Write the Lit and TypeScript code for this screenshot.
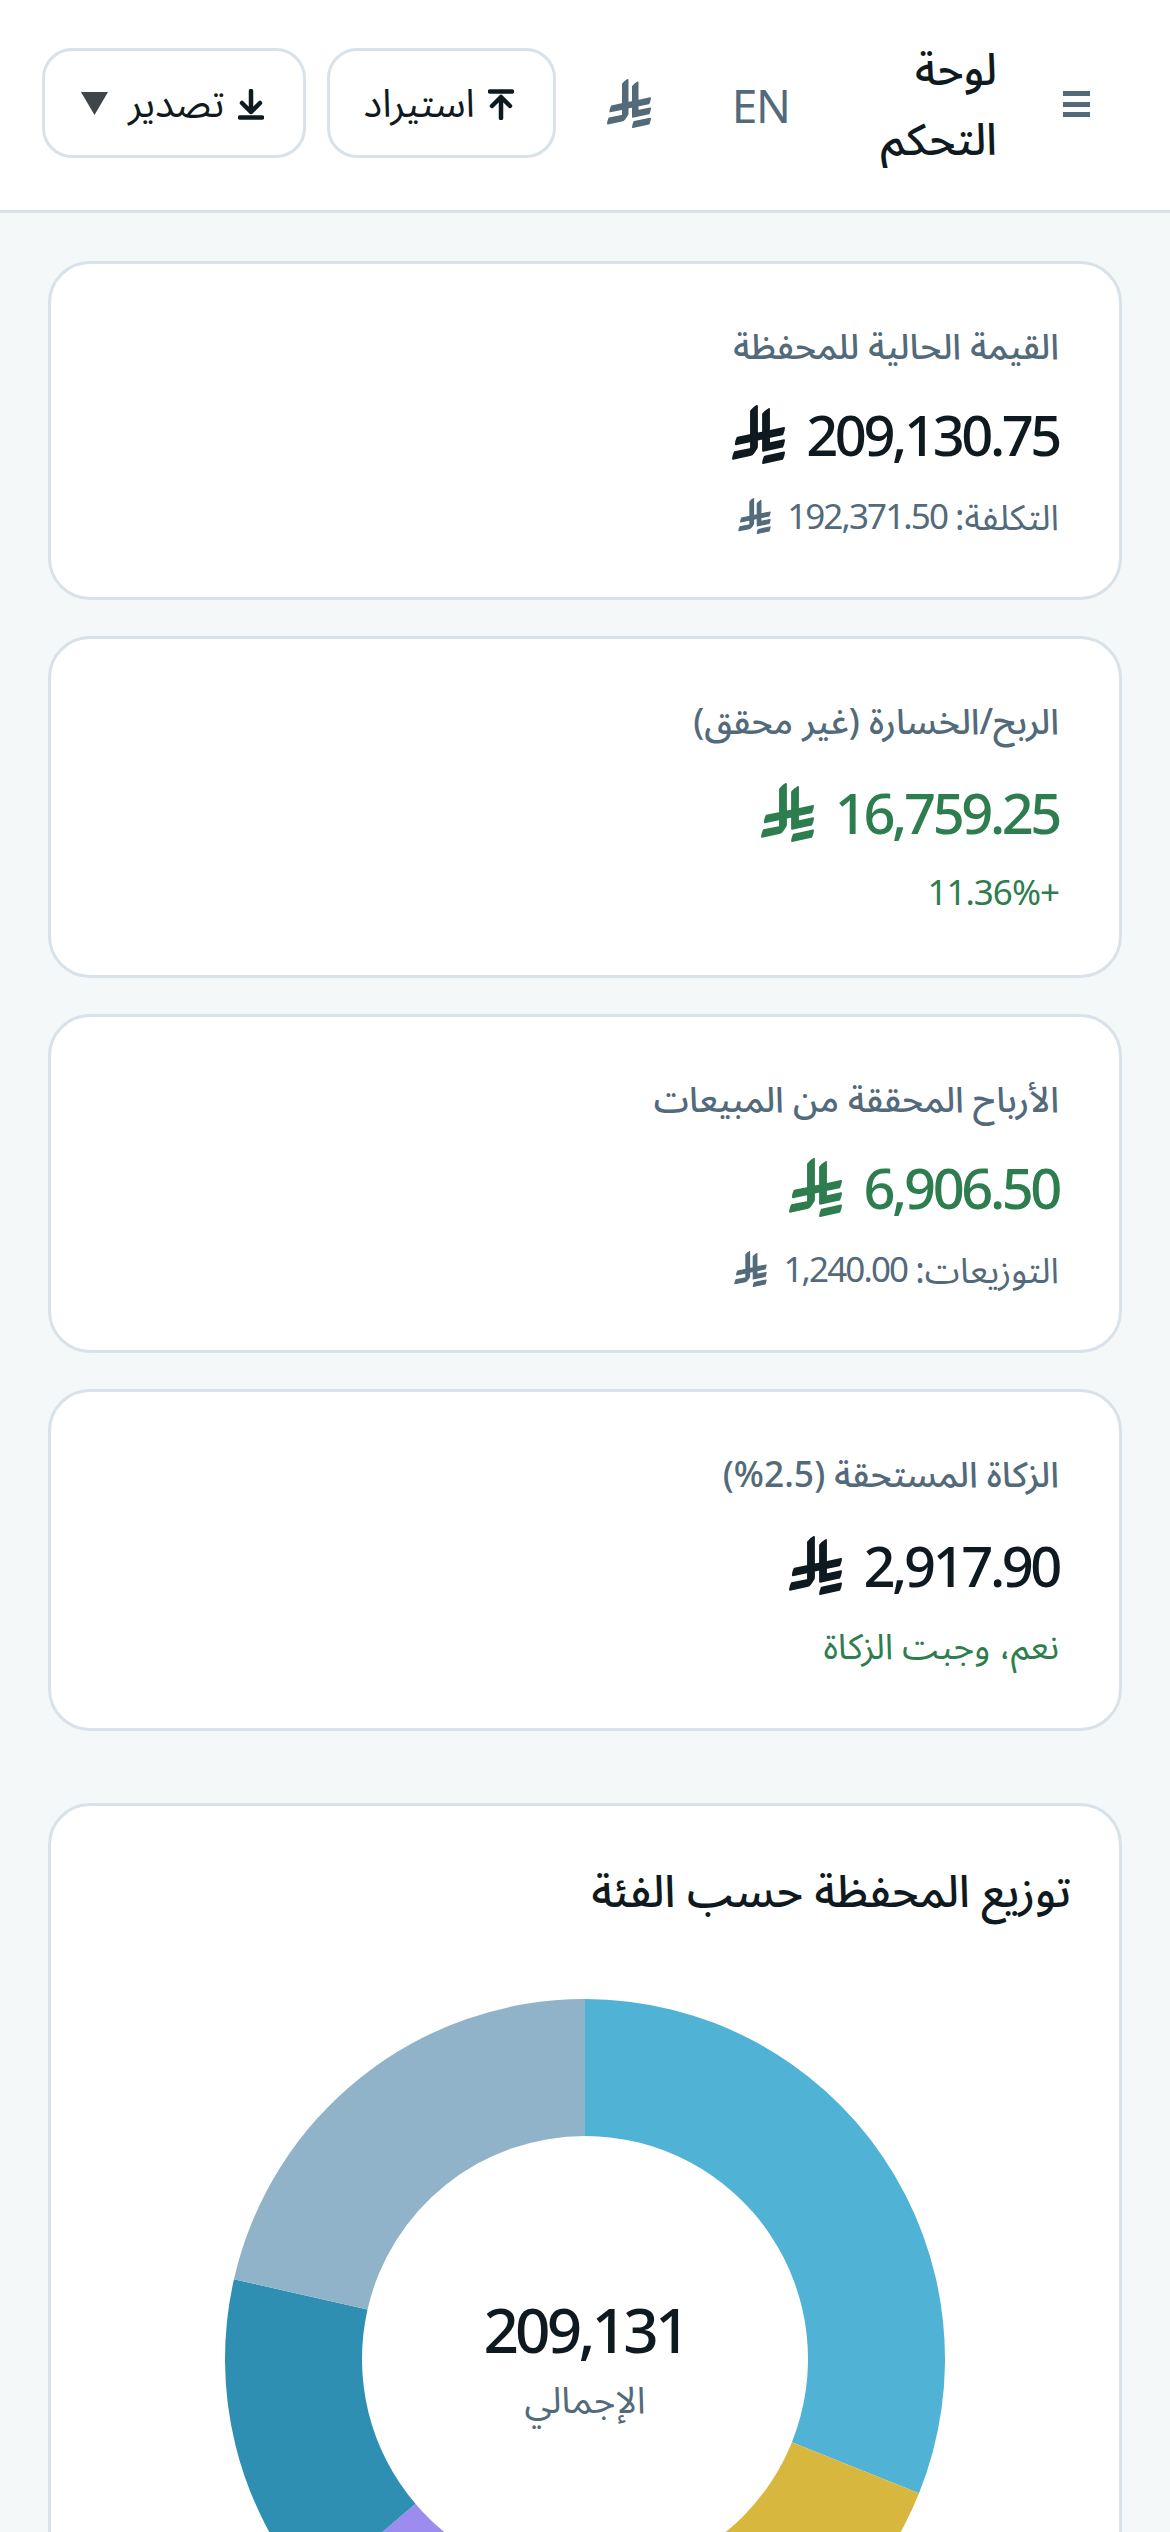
import { LitElement, html, css, svg } from "lit";
import { customElement } from "lit/decorators.js";

const RIYAL_D = [
  "M699.62,1113.02h0c-20.06,44.48-33.32,92.75-38.4,143.37l424.51-90.24c20.06-44.47,33.31-92.75,38.4-143.37l-424.51,90.24Z",
  "M1085.73,895.8c20.06-44.47,33.32-92.75,38.4-143.37l-330.68,70.33v-135.2l292.27-62.11c20.06-44.47,33.32-92.75,38.4-143.37l-330.68,70.27V66.13c-50.67,28.45-95.67,66.32-132.25,110.99v403.35l-132.25,28.11V0c-50.67,28.44-95.67,66.32-132.25,110.99v525.69l-295.91,62.88c-20.06,44.47-33.33,92.75-38.42,143.37l334.33-71.05v170.26l-358.3,76.14c-20.06,44.47-33.32,92.75-38.4,143.37l375.04-79.7c30.53-6.35,56.77-24.4,73.83-49.24l68.78-101.97v-.02c7.14-10.55,11.3-23.27,11.3-36.97v-149.98l132.25-28.11v270.4l424.53-90.28Z",
];

const riyal = (cls: string) => html`<svg class="riyal ${cls}" viewBox="-20 -20 1164.14 1296.39" aria-hidden="true">
  ${RIYAL_D.map((d) => svg`<path d=${d} fill="currentColor" stroke="currentColor" stroke-width="40" stroke-linejoin="round"></path>`)}
</svg>`;

interface Slice { from: number; to: number; color: string }
const SLICES: Slice[] = [
  { from: 0, to: 111.9, color: "#50b3d5" },
  { from: 111.9, to: 205, color: "#d8b73f" },
  { from: 205, to: 229.5, color: "#9d8cef" },
  { from: 229.5, to: 282.8, color: "#2e8fb3" },
  { from: 282.8, to: 360, color: "#90b3c9" },
];

function arc({ from, to }: Slice, R = 360, r = 223, c = 360) {
  const p = (a: number, rad: number) => {
    const t = (a * Math.PI) / 180;
    return `${(c + rad * Math.sin(t)).toFixed(2)} ${(c - rad * Math.cos(t)).toFixed(2)}`;
  };
  const large = to - from > 180 ? 1 : 0;
  return `M${p(from, R)}A${R} ${R} 0 ${large} 1 ${p(to, R)}L${p(to, r)}A${r} ${r} 0 ${large} 0 ${p(from, r)}Z`;
}

interface Card {
  label: string;
  value: string;
  tone: string;
  subText?: string;
  subNum?: string;
  subTone: string;
  tall?: boolean;
}

const CARDS: Card[] = [
  { label: "القيمة الحالية للمحفظة", value: "209,130.75", tone: "", subText: "التكلفة:", subNum: "192,371.50", subTone: "icon" },
  { label: "الربح/الخسارة (غير محقق)", value: "16,759.25", tone: "green", subNum: "+11.36%", subTone: "green", tall: true },
  { label: "الأرباح المحققة من المبيعات", value: "6,906.50", tone: "green", subText: "التوزيعات:", subNum: "1,240.00", subTone: "icon" },
  { label: "الزكاة المستحقة (2.5%)", value: "2,917.90", tone: "", subText: "نعم، وجبت الزكاة", subTone: "green", tall: true },
];

@customElement("app-root")
export class AppRoot extends LitElement {
  static styles = css`
    :host {
      display: block;
      height: 2532px;
      overflow: hidden;
      background: #f5f8f9;
      color: #0f1a20;
      font-family: "Noto Sans", "Noto Sans Arabic", sans-serif;
    }
    .header {
      display: flex;
      align-items: center;
      gap: 21px;
      height: 210px;
      padding: 0 48px 0 42px;
      background: #fff;
      border-bottom: 3px solid #d8e2e8;
    }
    .menu {
      display: flex;
      flex-direction: column;
      gap: 5.5px;
      padding: 0 32px 0 45px;
      margin-top: -2px;
    }
    .menu i {
      display: block;
      width: 27px;
      height: 5px;
      background: #526a7a;
    }
    .title {
      flex: 1;
      min-width: 0;
      height: 135px;
      margin-top: -9px;
      overflow: hidden;
      font-size: 44px;
      font-weight: 500;
      line-height: 70px;
    }
    .lang {
      padding: 0 30px;
      font-size: 46px;
      letter-spacing: -1.5px;
      color: #526a7a;
    }
    .cur {
      display: flex;
      padding: 0 30px;
      margin-top: -4px;
      color: #526a7a;
    }
    .riyal { display: block; flex: none; }
    .r-head { width: 44px; height: 49px; }
    .r-hero { width: 53px; height: 59px; }
    .r-sub { width: 33px; height: 36px; }
    .btn {
      display: flex;
      align-items: center;
      gap: 13px;
      box-sizing: border-box;
      height: 110px;
      margin-top: -4px;
      padding: 3px 39px 0 36px;
      background: #fff;
      border: 3px solid #d8e2e8;
      border-radius: 30px;
      font-size: 39px;
      white-space: nowrap;
    }
    .btn.import { padding-inline-end: 34px; }
    .btn svg { display: block; flex: none; }
    .caret { margin-inline-start: 7px; margin-top: -3px; }
    .main {
      display: flex;
      flex-direction: column;
      gap: 36px;
      padding: 48px 48px 0;
    }
    .card {
      box-sizing: border-box;
      height: 339px;
      padding: 54px 60px 0;
      background: #fff;
      border: 3px solid #d8e2e8;
      border-radius: 42px;
    }
    .card.tall { height: 342px; }
    .label {
      font-size: 35.4px;
      font-weight: 500;
      line-height: 54px;
      color: #526a7a;
      white-space: nowrap;
    }
    .value {
      display: flex;
      align-items: center;
      gap: 21px;
      height: 76px;
      margin-top: 24px;
      font-size: 56px;
      font-weight: 500;
      line-height: 76px;
      letter-spacing: -3.4px;
    }
    .tall .value { margin-top: 27px; }
    .value.green { color: #2e7d4f; }
    .sub {
      display: flex;
      align-items: center;
      gap: 8px;
      height: 54px;
      margin-top: 17px;
      font-size: 35.5px;
      line-height: 54px;
      color: #526a7a;
    }
    .tall .sub { margin-top: 15px; }
    .sub .num { font-size: 35px; letter-spacing: -1.9px; }
    .sub .riyal { margin-inline-start: 8px; }
    .sub.green { color: #2e7d4f; }
    .sub.green .num { letter-spacing: -1px; }
    .chart-card {
      margin-top: 36px;
      padding: 48px 48px 60px;
      background: #fff;
      border: 3px solid #d8e2e8;
      border-radius: 42px;
    }
    .chart-title {
      font-size: 44.5px;
      line-height: 72px;
      font-weight: 500;
    }
    .ring {
      position: relative;
      width: 720px;
      height: 720px;
      margin: 73px auto 0;
    }
    .ring svg { display: block; width: 720px; height: 720px; }
    .center {
      position: absolute;
      top: 285px;
      left: 0;
      right: 0;
      text-align: center;
    }
    .total {
      font-size: 62px;
      font-weight: 500;
      line-height: 90px;
      letter-spacing: -3.8px;
    }
    .total-label {
      margin-top: -2px;
      font-size: 37px;
      line-height: 54px;
      color: #526a7a;
    }
  `;

  render() {
    return html`
      <div dir="rtl">
        <header class="header">
          <div class="menu"><i></i><i></i><i></i></div>
          <div class="title">لوحة التحكم</div>
          <div class="lang">EN</div>
          <div class="cur">${riyal("r-head")}</div>
          <div class="btn import">
            <svg width="26" height="31" viewBox="0 0 26 31" fill="none" stroke="currentColor" stroke-width="4.5" stroke-linecap="round" stroke-linejoin="round">
              <path d="M2 2.5h22M13 29V8M4 17l9-9 9 9"></path>
            </svg>
            <span>استيراد</span>
          </div>
          <div class="btn">
            <svg width="26" height="31" viewBox="0 0 26 31" fill="none" stroke="currentColor" stroke-width="4.5" stroke-linecap="round" stroke-linejoin="round">
              <path d="M2 28.5h22M13 2v21M4 14l9 9 9-9"></path>
            </svg>
            <span>تصدير</span>
            <svg class="caret" width="27" height="23" viewBox="0 0 27 23"><path d="M0 0h27L13.5 23Z" fill="#3f4548"></path></svg>
          </div>
        </header>
        <main class="main">
          ${CARDS.map(
            (c) => html`
              <section class="card ${c.tall ? "tall" : ""}">
                <div class="label">${c.label}</div>
                <div class="value ${c.tone}"><span>${c.value}</span>${riyal("r-hero")}</div>
                <div class="sub ${c.subTone}">
                  ${c.subText ? html`<span>${c.subText}</span>` : ""}
                  ${c.subNum ? html`<span class="num">${c.subNum}</span>` : ""}
                  ${c.subTone === "icon" ? riyal("r-sub") : ""}
                </div>
              </section>
            `
          )}
          <section class="chart-card">
            <div class="chart-title">توزيع المحفظة حسب الفئة</div>
            <div class="ring">
              <svg viewBox="0 0 720 720">
                ${SLICES.map((s) => svg`<path d=${arc(s)} fill=${s.color}></path>`)}
              </svg>
              <div class="center">
                <div class="total">209,131</div>
                <div class="total-label">الإجمالي</div>
              </div>
            </div>
          </section>
        </main>
      </div>
    `;
  }
}
